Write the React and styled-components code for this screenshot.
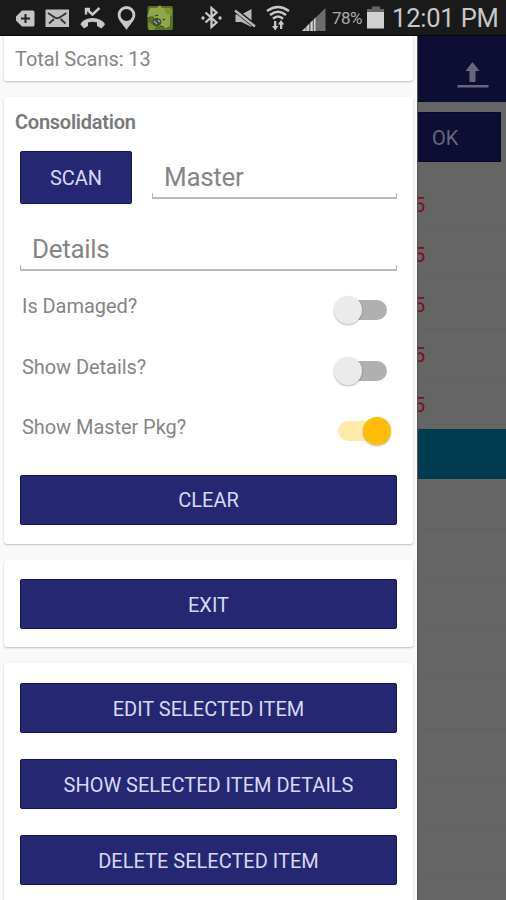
import styled, { createGlobalStyle } from 'styled-components';

const rows = [5, 5, 5, 5, 5];
const emptyRows = [0, 1, 2, 3, 4, 5, 6, 7];

export default function App() {
  return (
    <>
      <GlobalStyle />
      <Screen>
        <StatusBar />
        <Body>
          <Drawer>
            <Card $height={45} $flatTop>
              <Total>Total Scans: 13</Total>
            </Card>
            <Card $height={447}>
              <Title>Consolidation</Title>
              <ScanRow>
                <Button $width={112} $height={53}>SCAN</Button>
                <Field $width={245} $height={48}>
                  <Input placeholder="Master" aria-label="Master" />
                </Field>
              </ScanRow>
              <DetailsField $width={377} $height={47}>
                <Input placeholder="Details" aria-label="Details" />
              </DetailsField>
              <Options>
                <Option label="Is Damaged?" />
                <Option label="Show Details?" />
                <Option label="Show Master Pkg?" checked />
              </Options>
              <ClearButton>CLEAR</ClearButton>
            </Card>
            <Card $height={87}>
              <Actions>
                <Button>EXIT</Button>
              </Actions>
            </Card>
            <Card $height={300}>
              <Actions $top={20}>
                <Button>EDIT SELECTED ITEM</Button>
                <Button>SHOW SELECTED ITEM DETAILS</Button>
                <Button>DELETE SELECTED ITEM</Button>
              </Actions>
            </Card>
          </Drawer>
          <Behind>
            <Header>
              <svg width="32" height="34" viewBox="0 0 32 34" fill="#67677c">
                <path d="M15.5 0 22.5 9h-4v11h-6V9h-4z" />
                <path d="M0.5 23h31v2.5h-31z" />
              </svg>
            </Header>
            <OkBar>
              <OkButton>OK</OkButton>
            </OkBar>
            <List>
              {rows.map((value, i) => (
                <Row key={i}>{value}</Row>
              ))}
              <SelectedRow />
              {emptyRows.map((row) => (
                <Row key={row} />
              ))}
            </List>
          </Behind>
        </Body>
      </Screen>
    </>
  );
}

function Option({ label, checked }) {
  return (
    <OptionRow>
      <OptionLabel>{label}</OptionLabel>
      <Switch role="switch" aria-checked={!!checked} aria-label={label} $on={checked}>
        <Thumb $on={checked} />
      </Switch>
    </OptionRow>
  );
}

function StatusBar() {
  return (
    <Bar>
      <Glyph $left={16} width="19" height="36" viewBox="16 0 19 36">
        <path fill="#c4c4c4" d="M22 10.500h11a1.500 1.500 0 0 1 1.500 1.500v13a1.500 1.500 0 0 1-1.500 1.500H22L16 20.500v-4z" />
        <path stroke="#222" strokeWidth="2" d="M25.500 14v9M21 18.500h9" />
      </Glyph>
      <Glyph $left={10} width="24" height="36" viewBox="45 0 24 36">
        <rect x="45.500" y="9.500" width="23.500" height="17.500" fill="#c0c0c0" />
        <path fill="none" stroke="#333" strokeWidth="1.800" d="M48 13l6 4q3.200 2.500 6.400 0l6-4M49 23.500l5-4.500M65.500 23.500l-5-4.500" />
      </Glyph>
      <Glyph $left={11} width="26" height="36" viewBox="80 0 26 36">
        <path fill="#c8c8c8" d="M80.500 24.500c0-2 5-6.500 12-6.500s12.500 4.500 12.500 6.500l-3.500 4-4.500-2.500v-3.500q-4.500-1.500-9 0V26L84 28.500z" />
        <path fill="none" stroke="#c8c8c8" strokeWidth="2.400" d="M86 8v6.500M85 9h5M86.500 9l6 5.500 7-6.500" />
      </Glyph>
      <Glyph $left={11} width="19" height="36" viewBox="117 0 19 36">
        <path fill="#c8c8c8" fillRule="evenodd" d="M126.500 6a8.800 8.800 0 0 0-8.800 9c0 5.500 5.300 9 8.800 15 3.500-6 8.800-9.500 8.800-15a8.800 8.800 0 0 0-8.800-9zm0 3a6 6 0 1 1 0 12 6 6 0 0 1 0-12z" />
      </Glyph>
      <Glyph $left={11} width="27" height="36" viewBox="147 0 27 36">
        <rect x="147.500" y="6" width="25.500" height="24" rx="2" fill="#587225" />
        <path fill="#91a64c" d="M150 8h7l3-3 2 3h8v18l-4 2h-5l-3-5-5-7-6 1z" />
        <path fill="#7b962f" d="M148 22l8 5-2 3h-5zM164 8l8 1v7l-6-2z" />
        <ellipse cx="157" cy="22" rx="4.500" ry="4" fill="#3c4937" />
        <path stroke="#29331f" strokeWidth="1.300" d="M155 16l3-1M160 26l4 1.500M163 20l2-1" />
        <path stroke="#a7b0a0" strokeWidth="1.300" d="M154 21l3 3M158 20l2 2" />
      </Glyph>
      <Glyph $left={27} width="22" height="36" viewBox="201 0 22 36">
        <path fill="none" stroke="#c8c8c8" strokeWidth="2.300" d="M205.500 12.500l11 10-5 4.500V8l5 4.500-11 10" />
        <circle cx="203" cy="18" r="1.700" fill="#c8c8c8" />
        <circle cx="220" cy="18" r="1.700" fill="#c8c8c8" />
      </Glyph>
      <Glyph $left={11} width="23" height="36" viewBox="234 0 23 36">
        <path fill="#b8b8b8" d="M235.500 14.500h6l10-5.500v18l-10-5h-6z" />
        <path stroke="#1a1a1a" strokeWidth="4.500" d="M234.500 9.500l21 17" />
        <path stroke="#b8b8b8" strokeWidth="2.500" d="M235 10.500l20 16" />
      </Glyph>
      <Glyph $left={9} width="24" height="36" viewBox="266 0 24 36">
        <path fill="none" stroke="#c8c8c8" strokeWidth="2.500" d="M267 11q11-8 22 0M270 15q8-6.500 16 0M273 18.800q5-4.500 10 0" />
        <path fill="#c8c8c8" d="M276.300 21h-2.300v5h-2l3.200 4.500 3.200-4.500h-2.100zM280 29h2.300v-4.500h2L281 20l-3.200 4.500h2.200z" />
      </Glyph>
      <Glyph $left={12} width="24" height="36" viewBox="302 0 24 36">
        <path fill="#6c6c6c" d="M302 31L325.500 8v23z" />
        <path fill="#d0d0d0" d="M302 31l3.500-3.500V31zM306.500 31v-4.500l2.500-2.500v7zM310.500 31v-8.500l2.200-2.200V31zM314 31V19l1.500-1.500V31z" />
      </Glyph>
      <Percent>78%</Percent>
      <Glyph $left={3} width="18" height="36" viewBox="367 0 18 36">
        <path fill="#666" d="M372 6.500h8v2.500h4v4h-17v-4h5z" />
        <path fill="#d0d0d0" d="M367 12h17v16.500h-17z" />
      </Glyph>
      <Clock>12:01 PM</Clock>
    </Bar>
  );
}

const GlobalStyle = createGlobalStyle`
  * {
    box-sizing: border-box;
  }

  body {
    margin: 0;
    font-family: Roboto, sans-serif;
    overflow: hidden;
  }
`;

const Screen = styled.div`
  width: 506px;
  height: 900px;
  display: flex;
  flex-direction: column;
  overflow: hidden;
`;

const Bar = styled.div`
  display: flex;
  height: 36px;
  flex-shrink: 0;
  background: #1a1a1a;
  border-bottom: 1px solid #050505;
  color: #c8c8c8;
  white-space: nowrap;
`;

const Glyph = styled.svg`
  flex-shrink: 0;
  margin-left: ${(props) => props.$left}px;
`;

const Percent = styled.span`
  width: 32px;
  margin-left: 6px;
  font-size: 17px;
  line-height: 37px;
  letter-spacing: -0.6px;
  color: #aaa;
`;

const Clock = styled.span`
  margin-left: 7px;
  font-size: 25.5px;
  line-height: 36px;
  letter-spacing: -0.2px;
`;

const Body = styled.div`
  display: flex;
  flex: 1;
  min-height: 0;
`;

const Drawer = styled.div`
  display: flex;
  flex-direction: column;
  gap: 16px;
  width: 417px;
  flex-shrink: 0;
  padding: 0 4px;
  background: #f9f9f9;
  overflow: hidden;
`;

const Card = styled.section`
  height: ${(props) => props.$height}px;
  flex-shrink: 0;
  background: #fff;
  border-radius: ${(props) => (props.$flatTop ? '0 0 3px 3px' : '3px')};
  box-shadow: 0 1px 2px rgba(0, 0, 0, 0.24);
  color: #858585;
`;

const Total = styled.div`
  padding: 11px 0 0 11px;
  font-size: 20px;
  line-height: 24px;
  letter-spacing: -0.05px;
`;

const Title = styled.h2`
  margin: 0;
  padding: 13px 0 0 11px;
  font-size: 20px;
  font-weight: 600;
  line-height: 24px;
  letter-spacing: -0.25px;
  color: #787878;
`;

const ScanRow = styled.div`
  display: flex;
  gap: 20px;
  margin: 17px 0 0 16px;
`;

const Field = styled.div`
  width: ${(props) => props.$width}px;
  height: ${(props) => props.$height}px;
  display: flex;
  padding-left: 12px;
  border-bottom: 2px solid #b9b9b9;
  background: linear-gradient(#b9b9b9, #b9b9b9) left bottom / 1px 4px no-repeat,
    linear-gradient(#b9b9b9, #b9b9b9) right bottom / 1px 4px no-repeat;
`;

const DetailsField = styled(Field)`
  margin: 20px 0 0 16px;

  input {
    padding-top: 4px;
  }
`;

const Input = styled.input`
  width: 100%;
  padding: 6px 0 0;
  border: 0;
  outline: none;
  background: transparent;
  font-family: inherit;
  font-size: 26px;
  letter-spacing: -0.3px;

  &::placeholder {
    color: #858585;
    opacity: 1;
  }
`;

const Options = styled.div`
  padding: 9px 21px 0 18px;
`;

const OptionRow = styled.div`
  display: flex;
  justify-content: space-between;
  height: 60.5px;
  padding-top: 14px;
`;

const OptionLabel = styled.span`
  font-size: 20px;
  line-height: 24px;
  letter-spacing: -0.06px;
`;

const Switch = styled.div`
  display: flex;
  justify-content: ${(props) => (props.$on ? 'flex-end' : 'flex-start')};
  align-items: center;
  width: 50px;
  height: 20px;
  margin: 6px ${(props) => (props.$on ? 4 : 5)}px 0 0;
  border-radius: 10px;
  background: ${(props) => (props.$on ? '#ffe9a8' : '#b0b0b0')};
`;

const Thumb = styled.span`
  width: 28px;
  height: 28px;
  flex-shrink: 0;
  margin: 0 -3px;
  border-radius: 50%;
  background: ${(props) => (props.$on ? '#ffbd08' : '#ebebeb')};
  box-shadow: 0 1px 2px rgba(0, 0, 0, 0.3);
`;

const Button = styled.button`
  width: ${(props) => props.$width || 377}px;
  height: ${(props) => props.$height || 50}px;
  flex-shrink: 0;
  padding: 1px 0 0;
  border: 1px solid #151456;
  border-radius: 2px;
  background: #252772;
  color: #d8d9f2;
  font-family: inherit;
  font-size: 20px;
`;

const ClearButton = styled(Button)`
  margin: 13px 0 0 16px;
`;

const Actions = styled.div`
  display: flex;
  flex-direction: column;
  gap: 26px;
  padding: ${(props) => props.$top || 19}px 0 0 16px;
`;

const Behind = styled.div`
  flex: 1;
  min-width: 0;
  overflow: hidden;
  background: #656565;
  border-left: 1px solid #555;
`;

const Header = styled.div`
  display: flex;
  justify-content: flex-end;
  height: 66px;
  padding: 26px 17px 0 0;
  background: #0e0e34;
`;

const OkBar = styled.div`
  height: 77px;
  padding-top: 10px;
`;

const OkButton = styled.div`
  width: 83px;
  height: 50px;
  padding-left: 14px;
  background: #0e0e34;
  border: 1px solid #08082a;
  border-left: 0;
  color: #67677c;
  font-size: 20px;
  line-height: 50px;
`;

const List = styled.div`
  display: flex;
  flex-direction: column;
`;

const Row = styled.div`
  height: 50px;
  border-bottom: 1px solid #616161;
  color: #7b101b;
  font-size: 20px;
  line-height: 52px;
  text-indent: -4px;
`;

const SelectedRow = styled.div`
  height: 50px;
  background: #003c50;
`;
